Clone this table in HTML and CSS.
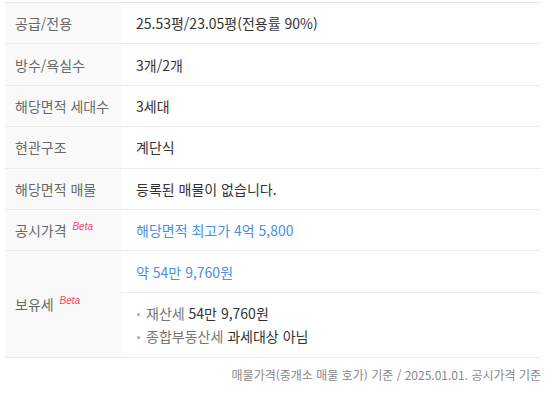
FILE: index.html
```html
<!DOCTYPE html>
<html lang="ko">
<head>
<meta charset="utf-8">
<link rel="stylesheet" href="styles.css">
</head>
<body>
<div class="wrap">
  <table class="info">
    <tr><th>공급/전용</th><td>25.53평/23.05평(전용률 90%)</td></tr>
    <tr><th>방수/욕실수</th><td>3개/2개</td></tr>
    <tr><th>해당면적 세대수</th><td>3세대</td></tr>
    <tr><th>현관구조</th><td>계단식</td></tr>
    <tr><th>해당면적 매물</th><td>등록된 매물이 없습니다.</td></tr>
    <tr><th>공시가격 <span class="beta">Beta</span></th><td class="blue">해당면적 최고가 4억 5,800</td></tr>
    <tr><th rowspan="2">보유세 <span class="beta">Beta</span></th><td class="blue">약 54만 9,760원</td></tr>
    <tr><td class="sub">
      <ul class="tax">
        <li><span class="k">재산세</span> 54만 9,760원</li>
        <li><span class="k">종합부동산세</span> 과세대상 아님</li>
      </ul>
    </td></tr>
  </table>
  <p class="note">매물가격(중개소 매물 호가) 기준 / 2025.01.01. 공시가격 기준</p>
</div>
</body>
</html>
```
FILE: styles.css
```css
html, body { margin: 0; padding: 0; background: #fff; }
body { font-family: "Noto Sans CJK KR", "Noto Sans", sans-serif; color: #333; }
.wrap { padding: 2px 11px 0 5px; }
.info { width: 100%; border-collapse: collapse; border-top: 1px solid #e8e8e8; }
.info th, .info td { border-bottom: 1px solid #ececec; height: 40.4px; padding: 0; font-size: 14px; vertical-align: middle; }
.info th { width: 116px; background: #f9f9f9; color: #6a6a6a; font-weight: normal; text-align: left; padding-left: 10px; box-sizing: border-box; white-space: nowrap; }
.info td { padding-left: 15px; color: #333; }
.info td.blue { color: #4a8fe0; }
.beta { color: #f0476b; font-style: italic; font-size: 10px; vertical-align: 6px; margin-left: 2px; font-family: "Liberation Sans", sans-serif; }
.info td.sub { height: 64px; }
.tax { list-style: none; margin: 0; padding: 0; }
.tax li { position: relative; padding-left: 10px; line-height: 23px; }
.tax li::before { content: ""; position: absolute; left: 1px; top: 11px; width: 3px; height: 3px; background: #aaa; border-radius: 50%; }
.tax .k { color: #777; }
.note { margin: 8px 0 0; text-align: right; font-size: 12px; color: #888; }
```
